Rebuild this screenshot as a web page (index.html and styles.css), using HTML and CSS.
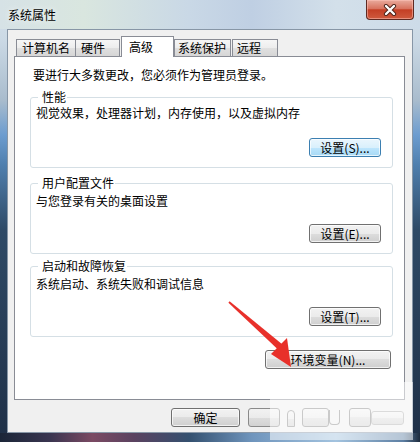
FILE: index.html
```html
<!DOCTYPE html>
<html lang="zh-CN">
<head>
  <meta charset="UTF-8" />
  <title>系统属性</title>
  <link rel="stylesheet" href="styles.css">
</head>
<body>

  <div class="window">
    <!-- Title bar -->
    <div class="titlebar">
      <span class="titlebar__text">系统属性</span>
      <div class="titlebar__close">
        <svg width="14" height="12" viewBox="0 0 14 12">
          <path d="M3 2 L11 10 M11 2 L3 10" stroke="#4b2219" stroke-width="4.2" stroke-linecap="round"/>
          <path d="M3 2 L11 10 M11 2 L3 10" stroke="#ffffff" stroke-width="2.4" stroke-linecap="round"/>
        </svg>
      </div>
    </div>

    <div class="client">
      <!-- Tabs -->
      <div class="tabs">
        <div class="tab tab--name">计算机名</div>
        <div class="tab tab--hw">硬件</div>
        <div class="tab tab--adv is-active">高级</div>
        <div class="tab tab--prot">系统保护</div>
        <div class="tab tab--remote">远程</div>
      </div>

      <div class="panel">
        <p class="panel__intro">要进行大多数更改，您必须作为管理员登录。</p>

        <div class="group group--perf">
          <div class="group__title">性能</div>
          <p class="group__desc">视觉效果，处理器计划，内存使用，以及虚拟内存</p>
          <div class="group__actions">
            <button class="btn btn--default">设置(S)...</button>
          </div>
        </div>

        <div class="group group--profile">
          <div class="group__title">用户配置文件</div>
          <p class="group__desc">与您登录有关的桌面设置</p>
          <div class="group__actions">
            <button class="btn">设置(E)...</button>
          </div>
        </div>

        <div class="group group--startup">
          <div class="group__title">启动和故障恢复</div>
          <p class="group__desc">系统启动、系统失败和调试信息</p>
          <div class="group__actions">
            <button class="btn">设置(T)...</button>
          </div>
        </div>

        <div class="panel__actions">
          <button class="btn btn--wide">环境变量(N)...</button>
        </div>
      </div>

      <!-- Dialog buttons (partly hidden by the watermark) -->
      <div class="footer">
        <button class="btn">确定</button>
        <span class="ghost ghost--a"></span>
        <span class="ghost ghost--narrow"></span>
        <span class="ghost ghost--b"></span>
        <span class="ghost ghost--cup"></span>
        <span class="ghost ghost--c"></span>
        <span class="ghost ghost--d"></span>
      </div>
    </div>

    <div class="watermark"></div>

    <!-- Red annotation arrow -->
    <svg class="arrow" width="420" height="442" viewBox="0 0 420 442">
      <polygon points="228.4,302.7 229.6,301.3 282.5,344.5 278,349.6" fill="#e8302a"/>
      <polygon points="271,354 287,338 291,367" fill="#e8302a"/>
    </svg>
  </div>

</body>
</html>
```

FILE: styles.css
```css
* {
  box-sizing: border-box;
  margin: 0;
  padding: 0;
}

body {
  font-family: "Noto Sans CJK SC", "Liberation Sans", sans-serif;
  font-size: 12px;
  color: #000;
  overflow: hidden;
}

.window {
  position: relative;
  width: 420px;
  height: 442px;
  background:
    linear-gradient(to right, #1b2638 0%, #3a3550 12%, #7b4a63 22%, #5a4260 32%, #34506f 45%, #6f95bd 60%, #a3c3df 80%, #5d7fa3 96%, #1d2b3d 100%) left bottom / 100% 9px no-repeat,
    linear-gradient(to bottom, #d5e1ea 0px, #cbd9e5 40px, #a9bccd 100px, #6c9ccf 135px, #4f7fae 165px, #2f4a66 230px, #1f3047 442px);
}

/* Title bar */
.titlebar {
  display: flex;
  justify-content: space-between;
  align-items: flex-start;
  height: 29px;
  background: linear-gradient(to right, #d6e2e6 0%, #d9e6df 20%, #c9d8e6 45%, #bfcfe3 60%, #d3e0ea 80%, #cddbe8 100%);
}

.titlebar__text {
  padding: 8px 0 0 8px;
  line-height: 14px;
  text-shadow: 0 0 6px #ffffff;
}

.titlebar__close {
  display: flex;
  align-items: center;
  justify-content: center;
  width: 48px;
  height: 20px;
  margin-right: 6px;
  border: 1px solid #5e2a22;
  border-top: none;
  border-radius: 0 0 4px 4px;
  background: linear-gradient(to bottom, #e9ab9d 0%, #d8735f 45%, #c43f25 52%, #cf5a3e 100%);
  box-shadow: inset 0 0 0 1px rgba(255, 200, 190, 0.5);
}

/* Client area */
.client {
  display: flex;
  flex-direction: column;
  height: 404px;
  margin: 0 7px;
  padding: 6px 8px 0 6px;
  background-color: #f0f0f0;
  border: 1px solid #8796a6;
}

.tabs {
  position: relative;
  z-index: 1;
  display: flex;
  align-items: flex-end;
  height: 21px;
  margin-bottom: -1px;
  padding-left: 2px;
}

.tab {
  height: 18px;
  padding-left: 5px;
  line-height: 16px;
  white-space: nowrap;
  border: 1px solid #898c95;
  background: linear-gradient(to bottom, #f6f6f6 0%, #ededed 50%, #e0e0e0 50%, #d6d6d6 100%);
}

.tab--name   { width: 60px; }
.tab--hw     { width: 45px; margin-left: -1px; }
.tab--adv    { width: 53px; margin-left: 1px; padding-left: 7px; }
.tab--prot   { width: 57px; padding-left: 3px; }
.tab--remote { width: 46px; margin-left: 1px; padding-left: 4px; }

.tab.is-active {
  height: 21px;
  padding-top: 2px;
  border-bottom: none;
  background: #ffffff;
}

/* Tab page */
.panel {
  width: 391px;
  height: 344px;
  padding: 10px 11px 0 15px;
  background-color: #ffffff;
  border: 1px solid #898c95;
}

.panel__intro {
  margin-left: 3px;
  line-height: 16px;
}

.group {
  border: 1px solid #d5dfe5;
  border-radius: 3px;
  padding: 0 11px 10px 5px;
}

.group--perf    { margin-top: 14px; }
.group--profile { margin-top: 15px; }
.group--startup { margin-top: 12px; }

.group__title {
  width: fit-content;
  margin: -9px 0 0 2px;
  padding: 0 1px 0 4px;
  line-height: 16px;
  background-color: #ffffff;
}

.group__desc {
  line-height: 16px;
}

.group__actions {
  display: flex;
  justify-content: flex-end;
  margin-top: 17px;
}

.group--profile .group__desc,
.group--startup .group__desc {
  margin-top: 2px;
}

.group--profile .group__actions,
.group--startup .group__actions {
  margin-top: 15px;
}

.panel__actions {
  display: flex;
  justify-content: flex-end;
  margin: 13px 2px 0 0;
}

/* Win7 style buttons */
.btn {
  width: 72px;
  height: 19px;
  font-family: inherit;
  font-size: 12px;
  line-height: 15px;
  color: #000;
  border: 1px solid #707070;
  border-radius: 3px;
  background: linear-gradient(to bottom, #f2f2f2 0%, #ebebeb 50%, #dddddd 50%, #cfcfcf 100%);
  box-shadow: inset 0 0 0 1px rgba(255, 255, 255, 0.7);
}

.btn--default {
  border-color: #3c7fb1;
  background: linear-gradient(to bottom, #eaf6fd 0%, #d9f0fc 50%, #bee6fd 50%, #a7d9f5 100%);
}

.btn--wide {
  width: 126px;
}

/* Bottom row */
.footer {
  display: flex;
  align-items: flex-start;
  margin-top: 8px;
  padding-left: 157px;
}

.ghost {
  display: block;
  height: 19px;
  border: 1px solid #8a8a8a;
  border-radius: 3px;
  background: linear-gradient(to bottom, #f2f2f2 0%, #ebebeb 50%, #dddddd 50%, #d2d2d2 100%);
}

.ghost--a      { width: 33px; margin-left: 8px; }
.ghost--narrow { width: 8px; height: 17px; margin: 2px 0 0 7px; border-radius: 4px 4px 0 0; }
.ghost--b      { width: 28px; margin-left: 7px; }
.ghost--cup    { width: 12px; height: 15px; margin-top: 2px; border-top: none; border-radius: 0 0 4px 4px; background: none; }
.ghost--c      { width: 23px; margin-left: 9px; }
.ghost--d      { width: 34px; height: 14px; margin-top: 3px; border-color: #b0b0b0; }

/* Overlays */
.watermark {
  position: absolute;
  left: 270px;
  top: 382px;
  width: 143px;
  height: 58px;
  background-color: rgba(255, 255, 255, 0.55);
}

.arrow {
  position: absolute;
  left: 0;
  top: 0;
  pointer-events: none;
}
```
